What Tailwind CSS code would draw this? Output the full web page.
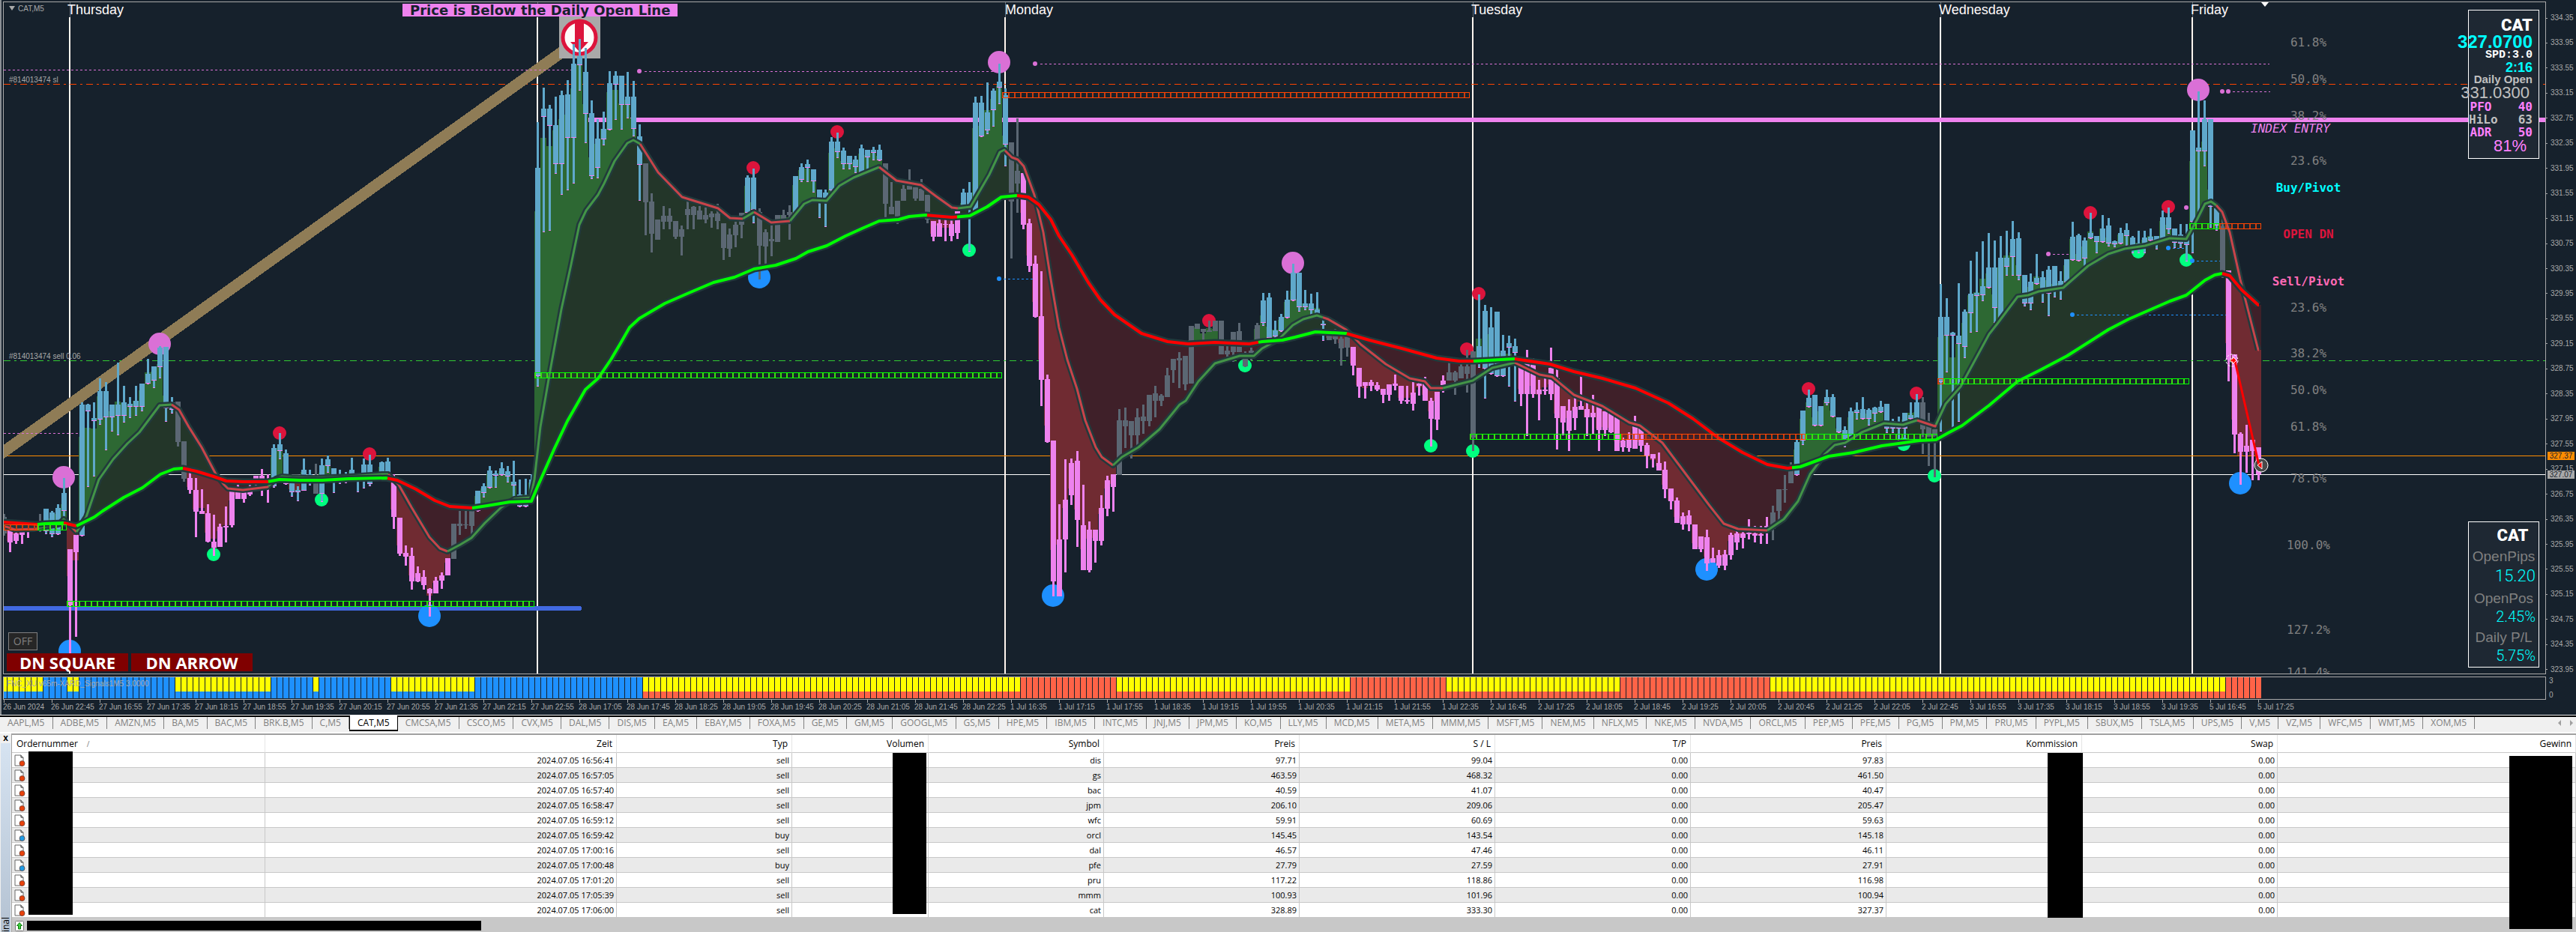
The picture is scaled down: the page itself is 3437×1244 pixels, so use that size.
<!DOCTYPE html>
<html lang="de">
<head>
  <meta charset="UTF-8" />
  <meta name="viewport" content="width=device-width, initial-scale=1.0"/>
  <title>CAT,M5</title>
  <script src="https://cdn.jsdelivr.net/npm/@tailwindcss/browser@4"></script>
</head>
<body class="bg-[#f0f0f0] font-['Open_Sans',sans-serif] text-black overflow-x-hidden">

  <!-- Chart window -->
  <main class="bg-[#16212c] border-l-2 border-[#8a8f94] text-[#a9a9a9] font-['Liberation_Sans',sans-serif] text-[10px] pl-0.5">
    <div class="flex pt-0.5">
      <div class="relative flex-1 h-[898px] border border-[#a9a9a9] overflow-hidden">
        <svg id="plot" class="absolute -left-[5px] -top-[3px] w-[3437px] h-[900px]" shape-rendering="crispEdges"></svg>

        <div class="absolute left-[7px] top-0 flex items-center gap-1 h-4">
          <svg class="w-2 h-2" viewBox="0 0 8 8"><path d="M0 1h8L4 7z" fill="#a9a9a9"/></svg>CAT,M5
        </div>
        <p class="absolute left-[7px] top-[96px]">#814013474 sl</p>
        <p class="absolute left-[7px] top-[465px]">#814013474 sell 0.06</p>
        <h1 class="absolute left-[532px] top-0.5 h-[17px] px-2.5 bg-[#ee82ee] text-[#16212c] font-['DejaVu_Sans',sans-serif] font-bold text-lg leading-[17px] whitespace-nowrap">Price is Below the Daily Open Line</h1>
        <div id="days" class="text-[#fffafa] text-lg leading-5"></div>
        <div id="levels" class="font-['DejaVu_Sans_Mono',monospace] text-base leading-5 text-center"></div>

        <button class="absolute left-1.5 top-[841px] w-[39px] h-6 border border-[#808080] bg-[#262626] text-[#808080] font-['Open_Sans',sans-serif] text-sm leading-5">OFF</button>
        <div class="absolute left-1 top-[869px] flex gap-1 font-['Open_Sans',sans-serif] font-bold text-[22px] leading-6 text-white">
          <button class="w-[162px] h-6 bg-[#800000]">DN SQUARE</button>
          <button class="w-[162px] h-6 bg-[#800000]">DN ARROW</button>
        </div>

        <!-- Quote panel -->
        <section class="absolute right-2 top-[10px] w-[95px] h-[199px] border border-white bg-[#1e2833] flex flex-col items-end pt-2 pr-2 whitespace-nowrap text-[#c0c0c0]">
          <span class="font-['Roboto',sans-serif] font-black text-[22px] leading-6 text-white">CAT</span>
          <b class="text-2xl leading-5 text-[#00ffff]">327.0700</b>
          <b class="font-['Liberation_Mono',monospace] text-[15px] leading-4 text-white">SPD:3.0</b>
          <b class="text-lg leading-4 text-[#00ffff]">2:16</b>
          <b class="text-[15px] leading-4">Daily Open</b>
          <span class="text-[22px] leading-5 pr-1">331.0300</span>
          <dl class="grid grid-cols-2 gap-x-6 text-right font-['DejaVu_Sans_Mono',monospace] font-bold text-base leading-[17px]">
            <dt class="text-[#ff80ff]">PFO</dt><dd class="text-[#ff80ff]">40</dd>
            <dt>HiLo</dt><dd>63</dd>
            <dt class="text-[#ff80ff]">ADR</dt><dd class="text-[#ff80ff]">50</dd>
          </dl>
          <span class="text-[22px] leading-5 pr-2 text-[#ff80ff]">81%</span>
        </section>

        <!-- Position panel -->
        <section class="absolute right-2 top-[693px] w-[95px] h-[195px] border border-white bg-[#1e2833] flex flex-col items-center pt-2 whitespace-nowrap text-[19px] text-[#808080]">
          <span class="font-['Roboto',sans-serif] font-black text-[22px] leading-5 text-white pl-6">CAT</span>
          <span class="pt-1 leading-7">OpenPips</span>
          <span class="self-end pr-1 font-['Roboto',sans-serif] font-light text-[22px] leading-6 text-[#00ffff]">15.20</span>
          <span class="pt-1 leading-7">OpenPos</span>
          <span class="self-end pr-1 font-['Roboto',sans-serif] font-light text-xl leading-5 text-[#00ffff]">2.45%</span>
          <span class="pt-1 leading-7">Daily P/L</span>
          <span class="self-end pr-1 font-['Roboto',sans-serif] font-light text-xl leading-5 text-[#00ffff]">5.75%</span>
        </section>
      </div>

      <!-- Price scale -->
      <div class="relative w-10">
        <ol id="prices" class="h-[900px] pt-3.5 flex flex-col justify-between leading-4"></ol>
        <span class="absolute left-0.5 top-[601px] w-9 h-[11px] bg-[#ff8c00] text-[#16212c] leading-[11px] text-center">327.37</span>
        <span class="absolute left-0.5 top-[626px] w-9 h-[11px] bg-[#a9a9a9] text-[#16212c] leading-[11px] text-center">327.07</span>
      </div>
    </div>

    <!-- Signal window -->
    <div class="flex pt-px">
      <div class="relative flex-1 h-[31px] border border-[#a9a9a9] overflow-hidden">
        <svg id="signals" class="absolute -left-[5px] top-0 w-[3437px] h-7" shape-rendering="crispEdges"></svg>
        <p class="absolute left-1 top-px leading-4">FNC_XU v65m-XARD_Signals1M5 3.0000</p>
      </div>
      <div class="w-10 pl-1 flex flex-col justify-between leading-3"><span>3</span><span>0</span></div>
    </div>
    <ol id="times" class="flex h-5 overflow-hidden whitespace-nowrap"></ol>
  </main>

  <!-- Chart tabs -->
  <nav class="border-t-2 border-black mt-px h-[21px] flex items-start justify-between text-xs text-[#808080]">
    <div id="tabs" class="flex flex-1 h-[19px]"></div>
    <div class="w-[135px] h-4 flex justify-end items-center gap-3 pr-1 shrink-0">
      <button aria-label="Zurück"><svg class="w-1 h-2" viewBox="0 0 4 8"><path d="M4 0v8L0 4z" fill="#a0a0a0"/></svg></button>
      <button aria-label="Weiter"><svg class="w-1 h-2" viewBox="0 0 4 8"><path d="M0 0v8l4-4z" fill="#a0a0a0"/></svg></button>
    </div>
  </nav>

  <!-- Terminal -->
  <section class="border-t-2 border-white mt-px flex">
    <aside class="w-[15px] shrink-0 h-[266px] overflow-hidden flex flex-col items-center">
      <button class="h-[13px] leading-[11px] text-xs font-bold font-['Liberation_Sans',sans-serif]">x</button>
      <div class="w-[13px] flex-1 bg-linear-to-b from-[#d6e3f1] to-[#b4c2d2] flex flex-col justify-end">
        <span class="[writing-mode:vertical-rl] rotate-180 text-xs leading-[13px] -mb-7">Terminal</span>
      </div>
    </aside>
    <div class="relative flex-1 border-t-2 border-l border-[#a0a0a0] bg-[#c8c8c8]">
      <table class="w-full table-fixed border-separate border-spacing-0 bg-white text-right">
        <colgroup>
          <col class="w-[338px]" /><col class="w-[469px]" /><col class="w-[234px]" /><col class="w-[182px]" /><col class="w-[234px]" /><col class="w-[261px]" />
          <col class="w-[261px]" /><col class="w-[261px]" /><col class="w-[261px]" /><col class="w-[261px]" /><col class="w-[261px]" /><col />
        </colgroup>
        <thead>
          <tr id="head" class="h-6 text-xs leading-4"></tr>
        </thead>
        <tbody id="orders" class="text-[11px] leading-4"></tbody>
      </table>
      <div class="h-[21px] flex items-center pl-1 gap-1">
        <svg class="w-3 h-[14px]" viewBox="0 0 12 14"><rect x=".5" y=".5" width="11" height="13" rx="1" fill="#fff" stroke="#777"/><path d="M6 2.500l3.500 4H7.500V11h-3V6.500h-2z" fill="#3fd13f" stroke="#0a7a0a"/></svg>
        <div class="w-[606px] h-[13px] bg-black"></div>
      </div>
      <div class="absolute left-[22px] top-[22px] w-[59px] h-[218px] bg-black"></div>
      <div class="absolute left-[1175px] top-6 w-[45px] h-[215px] bg-black"></div>
      <div class="absolute right-[658px] top-6 w-[47px] h-[220px] bg-black"></div>
      <div class="absolute right-[5px] top-7 w-[84px] h-[231px] bg-black"></div>
    </div>
  </section>

  <script>
    const X0 = 5, STEP = 8;
    const xOf = k => X0 + STEP * k;

    // high,top,bottom,low for each bar
    const bars = `686,690,712,715 704,706,724,737 705,712,722,726 706,710,714,726 696,700,704,718 696,699,702,704 686,696,706,710 679,679,708,712 682,684,712,716 673,678,712,713
638,658,681,690 733,733,808,875 714,714,737,850 537,540,714,715 539,540,548,649 537,558,561,635 505,522,559,566 510,522,556,600 540,540,556,575 484,540,554,580
515,537,554,563 530,539,542,557 515,535,542,554 512,512,542,548 479,499,511,512 489,489,507,517 462,464,489,504 463,463,544,562 530,537,546,551 536,536,590,596
589,589,639,643 631,638,654,659 638,654,683,717 653,682,686,686 673,685,723,724 687,723,731,742 699,703,730,730 676,702,704,724 656,656,701,704 646,657,666,666
652,657,666,671 645,652,660,662 635,635,640,652 626,635,640,662 633,640,650,671 593,598,648,650 578,593,601,612 600,605,645,646 636,645,656,662 649,654,656,668
612,627,654,654 627,633,638,647 619,635,659,659 612,621,658,669 608,613,621,630 625,625,643,657 627,633,643,645 630,634,640,644 611,627,633,637 632,634,640,656
612,620,640,651 607,620,645,648 633,634,640,641 616,617,632,640 611,616,632,638 633,638,690,706 691,691,739,742 728,738,743,755 731,742,776,787 756,765,776,777
761,770,781,787 785,786,792,823 770,775,792,792 764,768,775,786 745,745,768,768 699,699,746,746 682,699,702,714 682,700,701,706 682,682,702,715 655,655,681,682
645,649,657,663 622,628,650,651 628,632,634,650 617,625,633,634 622,629,635,643 615,643,647,663 640,660,675,676 639,663,675,676 633,640,660,661 163,224,501,515
117,145,155,309 140,145,167,307 129,167,218,231 121,127,218,259 107,126,183,253 59,85,183,244 52,75,86,120 64,96,151,190 134,151,234,238 159,185,223,237
149,172,185,193 95,111,172,173 95,101,112,159 101,101,139,172 96,129,139,157 108,129,171,181 166,182,219,267 218,218,270,314 258,269,312,337 293,293,320,320
275,288,296,306 278,288,296,306 295,295,316,319 301,306,316,341 269,279,287,306 275,276,287,306 275,281,293,293 277,287,293,298 282,285,290,304 272,285,295,306
298,298,331,347 305,313,332,343 296,300,314,330 284,284,300,318 234,237,283,284 225,237,279,297 278,283,328,373 306,310,329,353 294,319,322,342 287,287,323,323
280,287,293,293 274,283,287,320 235,235,283,284 218,223,239,242 213,219,223,242 226,226,241,256 253,253,267,290 253,257,267,302 183,189,253,256 177,189,202,210
197,201,218,225 208,208,218,225 208,213,222,230 193,198,229,230 200,200,209,227 196,200,203,213 193,200,213,214 218,218,272,291 243,276,286,286 268,268,296,299
247,252,268,268 226,248,253,253 250,250,265,268 239,252,268,268 260,260,293,298 295,295,316,322 292,298,316,316 292,299,300,322 294,299,315,322 282,282,311,319
252,257,277,278 243,257,278,335 129,137,280,281 128,137,181,182 110,150,173,178 118,121,146,168 85,109,116,138 118,127,192,221 190,190,269,345 158,228,245,284
231,231,300,306 292,298,355,363 341,352,423,424 362,422,507,542 500,506,590,591 588,588,776,796 673,720,796,796 613,667,720,764 612,618,661,674 602,615,694,730
647,701,761,761 696,707,761,764 707,707,722,751 661,678,722,728 635,641,679,689 633,633,650,683 546,561,634,634 544,561,569,598 562,562,581,612 545,557,581,597
540,556,562,579 527,527,562,569 515,525,535,557 526,528,535,542 491,501,530,530 479,479,494,511 470,478,481,518 475,475,513,521 435,435,512,512 432,432,439,439
439,439,443,455 428,441,443,443 428,428,442,442 428,428,473,473 460,468,473,476 443,443,470,483 431,442,470,470 469,479,489,490 464,468,474,481 431,434,457,457
391,401,430,434 391,397,450,451 428,441,448,451 419,423,441,442 388,400,423,424 352,364,400,401 364,364,409,415 387,405,409,413 392,405,413,419 390,413,418,419
427,432,433,454 440,440,454,454 439,446,453,459 441,452,465,488 450,450,464,476 463,463,488,501 491,491,516,531 510,510,515,532 507,510,515,522 510,514,520,522
519,519,527,538 513,513,527,535 500,512,515,521 515,515,535,539 515,534,536,539 510,524,539,548 508,512,515,528 503,507,535,535 531,535,559,596 523,523,560,574
501,508,515,524 483,497,508,508 495,497,508,527 485,489,505,505 467,489,499,524 469,469,584,602 393,462,482,490 407,415,491,531 410,437,498,499 416,416,501,502
447,468,501,502 448,458,463,515 452,462,470,535 481,481,526,542 467,485,526,582 478,486,526,531 507,520,526,561 502,520,522,527 464,491,526,534 493,505,558,600
542,542,564,581 533,548,575,602 531,543,558,574 501,542,547,547 533,546,557,582 527,551,557,580 538,542,574,602 549,549,574,582 550,550,577,578 551,557,602,602
584,588,597,603 577,586,598,603 555,566,599,599 566,569,595,603 591,594,608,625 606,606,612,624 604,618,628,628 616,627,653,665 652,652,669,680 664,668,698,698
684,689,700,707 681,688,700,709 700,700,733,733 716,716,733,737 707,717,752,762 731,745,751,751 734,741,755,758 734,740,755,761 711,714,741,747 709,712,724,734
710,712,718,732 693,711,713,720 702,712,715,724 702,713,715,726 690,702,705,726 675,684,706,721 653,653,682,696 634,653,654,671 617,626,645,645 587,590,633,634
548,548,587,593 520,531,542,543 527,527,567,568 542,542,567,568 520,530,537,540 526,530,555,556 557,557,576,577 569,574,586,596 544,549,586,587 537,547,550,559
530,546,558,559 545,547,558,567 543,544,551,562 535,543,549,550 539,539,571,577 559,562,571,577 556,565,571,587 551,551,571,587 537,554,558,559 526,537,558,559
530,537,573,606 551,568,586,622 573,573,584,637 379,423,509,575 398,423,447,496 443,444,447,571 378,448,458,562 413,416,462,477 348,392,417,443 336,391,394,442
322,382,393,401 311,357,383,384 321,357,410,430 315,344,423,424 308,344,355,367 295,319,342,367 310,318,367,373 367,367,404,408 365,376,404,413 339,371,378,379
362,370,390,403 355,360,391,421 355,355,383,396 362,375,387,399 346,346,376,377 296,316,346,347 312,314,347,348 317,321,344,356 284,311,317,318 315,315,322,337
287,305,322,323 291,301,324,328 321,322,325,329 304,311,324,325 298,307,314,327 315,317,327,337 308,325,329,337 308,317,327,337 305,316,320,321 315,315,320,332
281,290,318,319 277,290,305,311 305,305,323,330 299,313,324,330 299,317,326,348 174,174,295,337 122,197,201,283 134,159,201,221 159,159,275,303 273,278,300,307
291,302,362,371 361,361,480,509 473,473,580,605 577,579,603,647 567,595,603,631 587,587,602,641 597,597,633,641`
      .split(/\s+/).map(b => b.split(',').map(Number));

    const COLORS = { B: '#5fa8cb', G: '#5b6773', P: '#ee82ee' };
    const runs = '0G 1P 6G 7B 11P 13B 29G 31P 45B 52G 53B 65P 75G 79B 107G 124B 126G 132B 147G 155P 160B 168G 170P 186G 210B 221G 225P 241G 246B 253P 295G 299B 320G 323B 370G 371P'
      .split(' ').map(r => [parseInt(r), r.slice(-1)]);
    const pick = (list, v) => list.filter(r => r[0] <= v).pop()[1];

    const points = s => s.split(' ').map(p => p.split(',').map(Number));
    const slow = points('5,697 50,700 60,699 85,698 102,702 126,690 137,682 165,664 190,651 214,633 232,626 244,625 262,629 285,636 302,642 325,643 357,643 373,640 400,641 430,641 465,639 515,638 530,641 555,653 580,668 600,676 630,678 650,675 680,670 709,669 717,650 740,598 757,562 781,520 798,505 815,480 828,458 840,437 853,425 887,405 919,391 952,377 980,370 1006,359 1035,354 1062,345 1078,336 1103,328 1128,315 1150,305 1173,295 1199,293 1213,289 1235,287 1270,290 1294,288 1317,276 1336,263 1357,261 1372,263 1386,273 1402,293 1413,315 1430,340 1452,377 1468,400 1487,420 1523,445 1558,456 1585,459 1621,457 1667,459 1684,456 1711,454 1728,450 1755,443 1796,445 1827,454 1870,465 1917,478 1947,482 1966,482 2021,479 2068,486 2100,496 2138,505 2182,518 2226,538 2259,559 2292,584 2325,604 2358,620 2385,625 2402,623 2440,609 2473,604 2511,595 2561,588 2583,587 2599,578 2618,568 2654,541 2692,509 2720,495 2758,475 2813,440 2840,426 2895,402 2917,394 2942,374 2955,367 2965,365 2975,368 2991,387 3013,407');
    const fast = points('5,702 20,707 45,706 60,703 78,700 85,693 102,710 115,690 132,640 151,613 170,592 186,577 213,541 229,540 239,547 252,570 269,597 288,633 299,647 304,652 324,654 357,650 368,639 376,636 389,637 417,638 466,636 510,633 518,633 532,647 549,677 573,717 587,732 597,736 614,727 629,718 647,698 669,677 686,666 708,664 713,640 721,570 734,495 749,413 762,353 773,300 782,281 798,260 806,245 820,215 837,191 845,187 854,192 878,230 910,263 958,278 974,291 991,292 1006,283 1029,297 1054,295 1073,272 1084,267 1103,268 1120,248 1139,237 1173,223 1196,241 1229,247 1249,262 1270,277 1278,278 1295,276 1320,233 1334,203 1340,200 1350,210 1358,213 1366,222 1380,260 1392,310 1402,373 1413,437 1424,480 1437,519 1448,561 1462,597 1470,610 1485,621 1497,610 1519,597 1547,573 1574,540 1582,535 1599,509 1621,485 1654,475 1673,475 1684,465 1706,453 1725,434 1739,426 1757,421 1772,426 1796,440 1816,460 1849,486 1881,505 1901,509 1909,518 1925,518 1965,508 1991,491 2021,484 2054,500 2071,503 2100,527 2138,542 2174,564 2188,568 2218,591 2248,631 2281,675 2300,699 2319,706 2358,708 2380,693 2399,669 2415,633 2435,606 2448,594 2462,591 2484,577 2514,565 2539,567 2558,561 2582,569 2596,539 2616,516 2654,446 2665,432 2692,396 2706,394 2720,389 2753,384 2786,355 2813,339 2835,332 2862,328 2895,318 2917,319 2931,294 2942,272 2950,269 2957,274 2965,283 2975,310 2989,373 3013,467');
    const slowTurns = [5, 50, 85, 102, 244, 358, 517, 630, 1237, 1277, 1357, 1679, 1797, 1966, 2021, 2391, 2965, 3014];
    const fastTurns = [5, 50, 87, 102, 229, 358, 518, 597, 854, 991, 1006, 1054, 1173, 1278, 1341, 1485, 1765, 1925, 2021, 2358, 2558, 2583, 2957, 3014];

    // draw order of the turns: slow starts falling, then alternates
    function valueAt(line, x) {
      for (let i = 1; i < line.length; i++) {
        const [x1, y1] = line[i - 1], [x2, y2] = line[i];
        if (x <= x2) return y1 + (y2 - y1) * (x - x1) / (x2 - x1);
      }
      return line[line.length - 1][1];
    }

    const out = [];
    const rect = (x, y, w, h, fill) => out.push(`<rect x="${x}" y="${y}" width="${w}" height="${h}" fill="${fill}"/>`);
    const dots = (x1, x2, y, color) => out.push(`<path d="M${x1} ${y}H${x2}" stroke="${color}" stroke-dasharray="3 3" fill="none"/>`);
    const circles = (list, r, fill) => list.split(' ').forEach(p => {
      const [x, y] = p.split(',');
      out.push(`<circle cx="${x}" cy="${y}" r="${r}" fill="${fill}" shape-rendering="auto"/>`);
    });

    // horizontal and vertical lines
    [93, 717, 1341, 1965, 2589, 2925].forEach(x => {
      rect(x - 1, 23, 2, 877, '#fff5ee');
      rect(x, 3, 1, 20, '#5f6b76');
    });
    rect(5, 608, 3393, 1, '#ff8c00');
    rect(5, 633, 3393, 1, '#ffffff');
    out.push('<path d="M5 112.500H3398" stroke="#ff4500" stroke-dasharray="9 5 3 5" fill="none"/>');
    out.push('<path d="M5 481.500H3398" stroke="#32cd32" stroke-dasharray="9 5 3 5" fill="none"/>');
    out.push('<path d="M-5 610L770 55" stroke="#8f7c56" stroke-width="15"/>');
    rect(785, 157, 2613, 6, '#ee82ee');
    out.push('<path d="M5 812H773" stroke="#4169e1" stroke-width="6" stroke-linecap="round"/>');

    [[5, 763, 93.5], [860, 1333, 95.5], [1388, 3028, 85.5], [5, 108, 578.5], [2979, 3029, 122.5], [2739, 2760, 339.5]].forEach(d => dots(...d, '#da70d6'));

    // stop sign
    rect(746, 22, 55, 56, '#a9a9a9');
    out.push('<g shape-rendering="auto"><circle cx="773" cy="50" r="22" fill="#fffafa" stroke="#dc143c" stroke-width="5"/><path d="M767 29h12v27h6l-12 13-12-13h6z" fill="#dc143c"/></g>');

    circles('85,637 213,459 1333,83 1725,351 2933,120', 15, '#da70d6');
    circles('93,869 573,822 1013,370 1405,795 2277,760 2989,645', 15, '#1e90ff');
    circles('373,578 493,606 1005,224 1117,176 1613,428 1957,466 1973,392 2413,519 2557,525 2789,284 2893,276', 9, '#dc143c');
    circles('285,740 429,667 965,345 1293,334 1661,488 1909,595 1965,602', 9, '#00ff7f');
    circles('2581,635', 9, '#00ff7f');
    circles('853,95 1381,85 2733,339 2917,277 2965,122 2973,122', 3, '#da70d6');

    // area between the averages, and from the averages to price
    bars.forEach(([h, t, b, l], k) => {
      const x = xOf(k);
      for (let i = -4; i < 4; i++) {
        const f = valueAt(fast, x + i), s = valueAt(slow, x + i);
        rect(x + i, Math.min(f, s), 1, Math.abs(f - s), f < s ? '#233629' : '#3f2029');
      }
      const f = valueAt(fast, x), s = valueAt(slow, x);
      const next = bars[k + 1] || bars[k];
      const close = next[1] + next[2] < t + b ? t : b;
      const v = (h + l + 2 * close) / 4;
      const top = Math.min(f, s), bottom = Math.max(f, s);
      if (v < top) rect(x - 4, v, 8, top - v, '#2d6833');
      if (v > bottom) rect(x - 4, bottom, 8, v - bottom, '#702b32');
    });

    // markers that sit inside the shaded area
    circles('2540,593 2853,336 2917,347', 9, '#00ff7f');
    [[1339, 1380, 372.5], [2771, 2972, 420.5], [2899, 2915, 331.5], [2931, 2965, 348.5]].forEach(d => dots(...d, '#1e90ff'));

    // candles
    bars.forEach(([h, t, b, l], k) => {
      const x = xOf(k), type = pick(runs, k);
      rect(x - 1, h, 3, l - h, COLORS[type]);
      rect(x - 3, t, 7, Math.max(b - t, 1), COLORS[type]);
      if (type === 'B') {
        rect(x - 3, b, 7, 1, '#ee82ee');
        rect(x - 1, l, 3, 1, '#ee82ee');
      }
    });

    function drawAverage(line, turns, width, down, up) {
      const d = 'M' + line.map(p => p.join(' ')).join('L');
      out.push(`<path d="${d}" fill="none" stroke="#223a3c" stroke-width="${width + 5}" stroke-linejoin="round" shape-rendering="auto"/>`);
      turns.slice(1).forEach((end, i) => {
        const start = turns[i];
        const part = [[start, valueAt(line, start)], ...line.filter(p => p[0] > start && p[0] < end), [end, valueAt(line, end)]];
        out.push(`<path d="M${part.map(p => p.join(' ')).join('L')}" fill="none" stroke="${i % 2 ? up : down}" stroke-width="${width}" stroke-linejoin="round" shape-rendering="auto"/>`);
      });
    }
    drawAverage(fast, fastTurns, 3, '#c8444a', '#439447');
    drawAverage(slow, slowTurns, 4, '#ff0000', '#00ff00');

    // open-price ladders
    [[5, 50, 700, 0], [50, 89, 700, 1], [89, 713, 802, 1], [713, 1337, 497, 1], [1337, 1961, 123, 0], [1961, 2163, 579, 1], [2163, 2409, 579, 0],
     [2409, 2585, 579, 1], [2585, 2593, 505, 0], [2593, 2921, 505, 1], [2921, 2961, 298, 1], [2961, 3017, 298, 0]].forEach(([x1, x2, y, up]) => {
      const c = up ? '#00ff00' : '#ff4500', rung = up ? '#3fdc10' : '#c83c10';
      for (let x = x1; x < x2; x += 8) rect(x, y, 2, 7, rung);
      rect(x1, y, x2 - x1, 1, c);
      rect(x1, y + 7, x2 - x1, 1, c);
      rect(x2 - 1, y, 1, 7, c);
    });
    circles('1333,372 2765,420 2893,331 2925,348', 3, '#1e90ff');

    // trade
    out.push('<g shape-rendering="auto"><circle cx="2978" cy="481" r="8" fill="none" stroke="#fff" stroke-dasharray="3 2"/><circle cx="3017" cy="621" r="9" fill="#4a4a4a" stroke="#fff"/><path d="M2982 482L3014 621" stroke="#f00" stroke-width="3"/><path d="M2976 479h3v-3l5 5-5 5v-3h-3z" fill="#f00" stroke="#fff"/><path d="M3018 616v10l-6-5z" fill="#f00" stroke="#fff"/><path d="M3017 3h10l-5 6z" fill="#fff"/></g>');
    document.getElementById('plot').innerHTML = out.join('');

    // signal columns
    const states = [[0, 'yb'], [7, 'bb'], [11, 'yb'], [13, 'bb'], [29, 'yb'], [45, 'bb'], [52, 'yb'], [53, 'bb'], [65, 'yb'], [79, 'bb'], [107, 'yr'],
      [170, 'rr'], [186, 'yr'], [225, 'rr'], [241, 'yr'], [270, 'rr'], [295, 'yr'], [371, 'rr']];
    const fills = { y: '#ffff00', b: '#1e90ff', r: '#ff6347' };
    document.getElementById('signals').innerHTML = bars.map((_, k) => {
      const [up, low] = pick(states, k);
      return `<rect x="${xOf(k) - 3}" width="7" height="19" fill="${fills[up]}"/><rect x="${xOf(k) - 3}" y="19" width="7" height="9" fill="${fills[low]}"/>`;
    }).join('');

    // labels
    document.getElementById('days').innerHTML = [[90, 'Thursday'], [1341, 'Monday'], [1963, 'Tuesday'], [2587, 'Wednesday'], [2923, 'Friday']]
      .map(([x, day]) => `<span class="absolute top-0" style="left:${x - 5}px">${day}</span>`).join('');
    const levels = [[56, '61.8%'], [105, '50.0%'], [154, '38.2%'], [214, '23.6%'], [410, '23.6%'], [471, '38.2%'], [520, '50.0%'], [569, '61.8%'], [638, '78.6%'],
      [727, '100.0%'], [840, '127.2%'], [897, '141.4%'], [250, 'Buy/Pivot', 'text-[#00ffff] font-bold'], [312, 'OPEN DN', 'text-[#dc143c] font-bold'],
      [375, 'Sell/Pivot', 'text-[#ff69b4] font-bold'], [171, 'INDEX ENTRY', 'text-[#ee82ee] italic -ml-6']];
    document.getElementById('levels').innerHTML = levels
      .map(([y, text, cls]) => `<span class="absolute left-[3015px] w-[120px] ${cls || 'text-[#808080]'}" style="top:${y - 12}px">${text}</span>`).join('');

    document.getElementById('prices').innerHTML = Array.from({ length: 27 }, (_, i) =>
      `<li class="flex items-center gap-1"><i class="w-0.5 h-px bg-[#a9a9a9]"></i>${(334.35 - 0.4 * i).toFixed(2)}</li>`).join('');

    const sessions = [['26 Jun', '2024 22:45'], ['27 Jun', '16:55 17:35 18:15 18:55 19:35 20:15 20:55 21:35 22:15 22:55'],
      ['28 Jun', '17:05 17:45 18:25 19:05 19:45 20:25 21:05 21:45 22:25'], ['1 Jul', '16:35 17:15 17:55 18:35 19:15 19:55 20:35 21:15 21:55 22:35'],
      ['2 Jul', '16:45 17:25 18:05 18:45 19:25 20:05 20:45 21:25 22:05 22:45'], ['3 Jul', '16:55 17:35 18:15 18:55 19:35'], ['5 Jul', '16:45 17:25']];
    document.getElementById('times').innerHTML = sessions.flatMap(([day, hours]) => hours.split(' ').map(h => `${day} ${h}`))
      .map(t => `<li class="w-16 shrink-0 leading-3"><i class="block w-px h-1 ml-px bg-[#a9a9a9]"></i>${t}</li>`).join('');

    const symbols = 'AAPL ADBE AMZN BA BAC BRK.B C CAT CMCSA CSCO CVX DAL DIS EA EBAY FOXA GE GM GOOGL GS HPE IBM INTC JNJ JPM KO LLY MCD META MMM MSFT NEM NFLX NKE NVDA ORCL PEP PFE PG PM PRU PYPL SBUX TSLA UPS V VZ WFC WMT XOM'.split(' ');
    document.getElementById('tabs').innerHTML = symbols.map(s => s === 'CAT'
      ? `<a href="#" class="grow text-center leading-4 bg-white text-black border-x border-b-2 border-black -mt-0.5 pt-0.5">${s},M5</a>`
      : `<a href="#" class="grow text-center leading-4 h-4 border-r border-[#808080]">${s},M5</a>`).join('');

    // order table
    const columns = ['Ordernummer', 'Zeit', 'Typ', 'Volumen', 'Symbol', 'Preis', 'S / L', 'T/P', 'Preis', 'Kommission', 'Swap', 'Gewinn'];
    document.getElementById('head').innerHTML = columns.map((c, i) => i
      ? `<th class="font-normal pr-[5px] border-r border-b border-r-[#e5e5e5] border-b-[#c8c8c8]">${c}</th>`
      : `<th class="font-normal text-left pl-1.5 border-r border-b border-r-[#e5e5e5] border-b-[#c8c8c8]">${c}<span class="pl-3 text-[#808080] text-[10px]">/</span></th>`).join('');
    const orders = [
      ['16:56:41', 'sell', 'dis', '97.71', '99.04', '97.83'],
      ['16:57:05', 'sell', 'gs', '463.59', '468.32', '461.50'],
      ['16:57:40', 'sell', 'bac', '40.59', '41.07', '40.47'],
      ['16:58:47', 'sell', 'jpm', '206.10', '209.06', '205.47'],
      ['16:59:12', 'sell', 'wfc', '59.91', '60.69', '59.63'],
      ['16:59:42', 'buy', 'orcl', '145.45', '143.54', '145.18'],
      ['17:00:16', 'sell', 'dal', '46.57', '47.46', '46.11'],
      ['17:00:48', 'buy', 'pfe', '27.79', '27.59', '27.91'],
      ['17:01:20', 'sell', 'pru', '117.22', '118.86', '116.98'],
      ['17:05:39', 'sell', 'mmm', '100.93', '101.96', '100.94'],
      ['17:06:00', 'sell', 'cat', '328.89', '333.30', '327.37']
    ];
    document.getElementById('orders').innerHTML = orders.map(([time, type, symbol, open, sl, price]) => {
      const icon = `<svg class="w-[15px] h-4 ml-[3px]" viewBox="0 0 15 16"><path d="M1 1h8l3 3v11H1z" fill="#fff" stroke="#666"/><path d="M9 1v3h3" fill="#ddd" stroke="#333"/><circle cx="10.500" cy="12" r="3.500" fill="${type === 'buy' ? '#1e9be6' : '#e8420c'}" stroke="#5a3a30" stroke-width=".7"/></svg>`;
      const cells = [icon, `2024.07.05 ${time}`, type, '', symbol, open, sl, '0.00', price, '', '0.00', ''];
      return `<tr class="h-5 even:bg-[#eaeaea]">${cells.map(c => `<td class="pr-[3px] border-r border-b border-[#c8c8c8]">${c}</td>`).join('')}</tr>`;
    }).join('');
  </script>

</body>
</html>
